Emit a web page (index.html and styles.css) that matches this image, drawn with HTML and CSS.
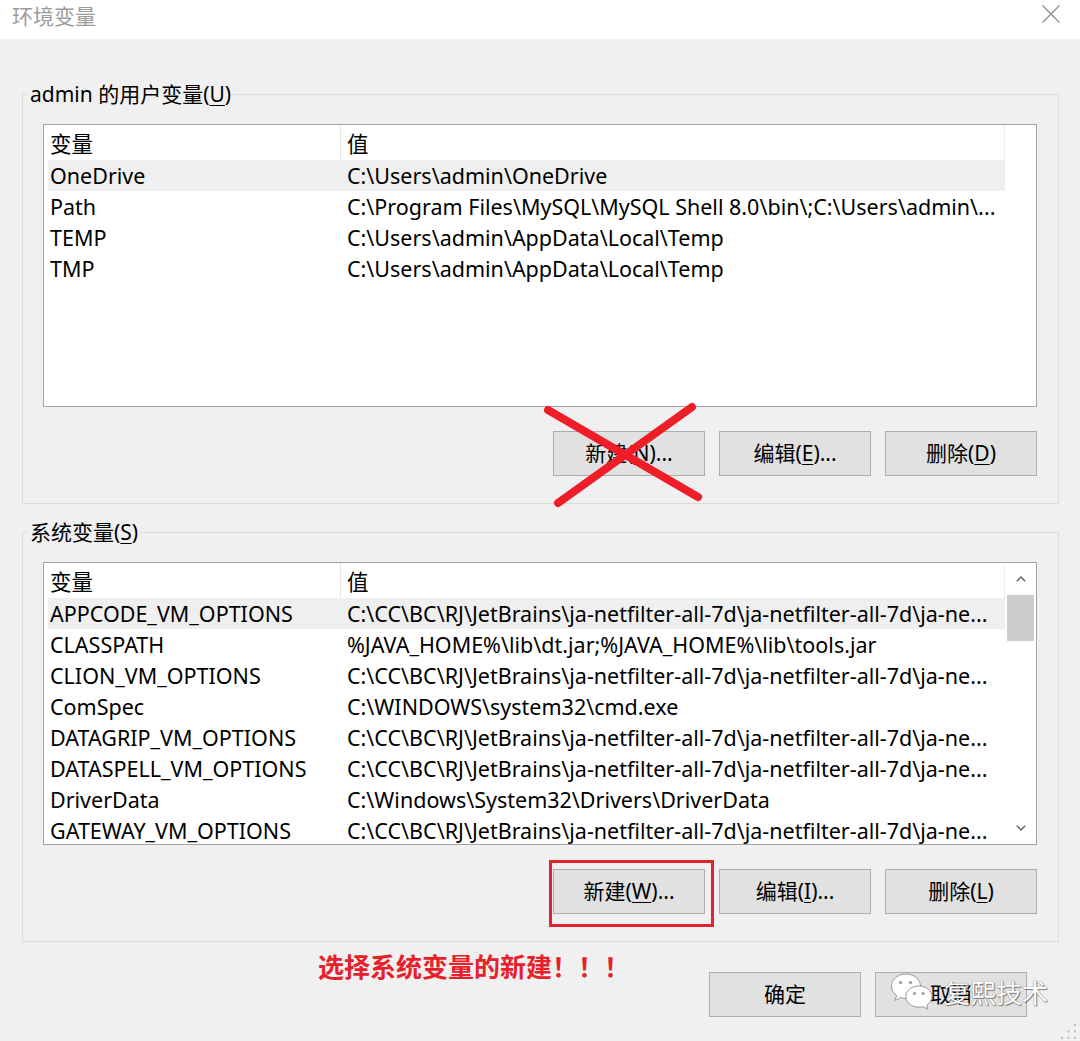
FILE: index.html
```html
<!DOCTYPE html>
<html lang="zh-CN">
<head>
<meta charset="utf-8">
<title>环境变量</title>
<link rel="stylesheet" href="styles.css">
</head>
<body>
<div class="window">
  <header class="titlebar">
    <span class="title">环境变量</span>
    <svg class="close" viewBox="0 0 18 18" aria-hidden="true">
      <path d="M0.5 0.5 L17.5 17.5 M17.5 0.5 L0.5 17.5" />
    </svg>
  </header>

  <main class="content">
    <fieldset class="group">
      <legend>admin 的用户变量(<u>U</u>)</legend>
      <div class="group-body">
        <div class="list">
          <div class="list-main">
            <div class="list-head">
              <div class="col-name">变量</div>
              <div class="col-value">值</div>
            </div>
            <div class="row selected"><div class="cell-name">OneDrive</div><div class="cell-value">C:\Users\admin\OneDrive</div></div>
            <div class="row"><div class="cell-name">Path</div><div class="cell-value">C:\Program Files\MySQL\MySQL Shell 8.0\bin\;C:\Users\admin\...</div></div>
            <div class="row"><div class="cell-name">TEMP</div><div class="cell-value">C:\Users\admin\AppData\Local\Temp</div></div>
            <div class="row"><div class="cell-name">TMP</div><div class="cell-value">C:\Users\admin\AppData\Local\Temp</div></div>
          </div>
          <div class="scrollbar"></div>
        </div>
        <div class="actions">
          <button class="btn">新建(<u>N</u>)...</button>
          <button class="btn">编辑(<u>E</u>)...</button>
          <button class="btn">删除(<u>D</u>)</button>
        </div>
      </div>
    </fieldset>

    <fieldset class="group">
      <legend>系统变量(<u>S</u>)</legend>
      <div class="group-body">
        <div class="list">
          <div class="list-main">
            <div class="list-head">
              <div class="col-name">变量</div>
              <div class="col-value">值</div>
            </div>
            <div class="row selected"><div class="cell-name">APPCODE_VM_OPTIONS</div><div class="cell-value">C:\CC\BC\RJ\JetBrains\ja-netfilter-all-7d\ja-netfilter-all-7d\ja-ne...</div></div>
            <div class="row"><div class="cell-name">CLASSPATH</div><div class="cell-value">%JAVA_HOME%\lib\dt.jar;%JAVA_HOME%\lib\tools.jar</div></div>
            <div class="row"><div class="cell-name">CLION_VM_OPTIONS</div><div class="cell-value">C:\CC\BC\RJ\JetBrains\ja-netfilter-all-7d\ja-netfilter-all-7d\ja-ne...</div></div>
            <div class="row"><div class="cell-name">ComSpec</div><div class="cell-value">C:\WINDOWS\system32\cmd.exe</div></div>
            <div class="row"><div class="cell-name">DATAGRIP_VM_OPTIONS</div><div class="cell-value">C:\CC\BC\RJ\JetBrains\ja-netfilter-all-7d\ja-netfilter-all-7d\ja-ne...</div></div>
            <div class="row"><div class="cell-name">DATASPELL_VM_OPTIONS</div><div class="cell-value">C:\CC\BC\RJ\JetBrains\ja-netfilter-all-7d\ja-netfilter-all-7d\ja-ne...</div></div>
            <div class="row"><div class="cell-name">DriverData</div><div class="cell-value">C:\Windows\System32\Drivers\DriverData</div></div>
            <div class="row"><div class="cell-name">GATEWAY_VM_OPTIONS</div><div class="cell-value">C:\CC\BC\RJ\JetBrains\ja-netfilter-all-7d\ja-netfilter-all-7d\ja-ne...</div></div>
          </div>
          <div class="scrollbar">
            <div class="sb-arrow">
              <svg viewBox="0 0 10 6" aria-hidden="true"><polyline points="0.8,5.2 5,1 9.2,5.2" /></svg>
            </div>
            <div class="sb-thumb"></div>
            <div class="sb-track"></div>
            <div class="sb-arrow sb-arrow-down">
              <svg viewBox="0 0 10 6" aria-hidden="true"><polyline points="0.8,0.8 5,5 9.2,0.8" /></svg>
            </div>
          </div>
        </div>
        <div class="actions">
          <span class="btn-wrap">
            <button class="btn">新建(<u>W</u>)...</button>
            <span class="callout"></span>
          </span>
          <button class="btn">编辑(<u>I</u>)...</button>
          <button class="btn">删除(<u>L</u>)</button>
        </div>
      </div>
    </fieldset>
  </main>

  <footer class="footer">
    <p class="note">选择系统变量的新建！！！</p>
    <div class="footer-actions">
      <button class="btn">确定</button>
      <button class="btn">取消</button>
    </div>
  </footer>

  <!-- red cross struck over the user-variable "new" button -->
  <svg class="strike" viewBox="0 0 170 115" aria-hidden="true">
    <line x1="8" y1="12" x2="158" y2="99" />
    <line x1="152" y1="9" x2="18" y2="105" />
  </svg>

  <!-- account watermark -->
  <div class="watermark">
    <svg class="wm-icon" viewBox="0 0 44 40" aria-hidden="true">
      <path class="bubble" d="M16 2 C7.7 2 1.5 7.6 1.5 14.2 C1.5 18 3.5 21.2 6.6 23.4 L5 28.5 L10.8 25.6 C12.5 26.1 14.2 26.4 16 26.4 C24.3 26.4 30.5 20.8 30.5 14.2 C30.5 7.6 24.3 2 16 2 Z" />
      <circle class="eye" cx="10.5" cy="10.5" r="1.6" />
      <circle class="eye" cx="20.5" cy="10.5" r="1.6" />
      <path class="bubble" d="M29 14 C21.5 14 15.8 18.8 15.8 24.6 C15.8 30.4 21.5 35.2 29 35.2 C30.5 35.2 31.9 35 33.2 34.6 L38 37.3 L36.8 33 C39.8 31.1 42 28 42 24.6 C42 18.8 36.3 14 29 14 Z" />
      <circle class="eye" cx="24.5" cy="21.5" r="1.5" />
      <circle class="eye" cx="33" cy="21.5" r="1.5" />
    </svg>
    <span class="wm-text">复熙技术</span>
  </div>

  <svg class="grip" viewBox="0 0 16 16" aria-hidden="true">
    <rect x="13" y="1" width="2" height="2" />
    <rect x="6.5" y="7.5" width="2" height="2" />
    <rect x="13" y="7.5" width="2" height="2" />
    <rect x="0" y="14" width="2" height="2" />
    <rect x="6.5" y="14" width="2" height="2" />
    <rect x="13" y="14" width="2" height="2" />
  </svg>
</div>
</body>
</html>
```

FILE: styles.css
```css
* {
  box-sizing: border-box;
}

html,
body {
  margin: 0;
  padding: 0;
}

body {
  width: 1080px;
  height: 1041px;
  overflow: hidden;
  background: #f0f0f0;
  color: #000;
  font-family: "Noto Sans", "Noto Sans CJK SC", sans-serif;
  font-size: 21px;
}

.window {
  position: relative;
  height: 1041px;
  display: flex;
  flex-direction: column;
}

/* ---- title bar ---- */
.titlebar {
  flex: none;
  height: 39px;
  background: #fff;
  display: flex;
  justify-content: space-between;
  align-items: flex-start;
  padding: 3px 20px 0 12px;
}

.title {
  font-family: "Noto Sans CJK SC", sans-serif;
  font-size: 21px;
  line-height: 24px;
  color: #9c9c9c;
}

.close {
  width: 18px;
  height: 18px;
  margin-top: 2px;
}

.close path {
  stroke: #8e8e8e;
  stroke-width: 1.3;
  fill: none;
}

/* ---- group boxes ---- */
.content {
  flex: none;
  padding: 43px 21px 0 22px;
}

.group {
  margin: 0;
  padding: 0;
  min-width: 0;
  border: 1px solid #dcdcdc;
}

.group + .group {
  margin-top: 16px;
}

.group legend {
  margin-left: 5px;
  padding: 0 2px;
  font-size: 21px;
  line-height: 24px;
}

.group-body {
  padding: 18px 21px 27px 20px;
}

u {
  text-decoration-thickness: 1px;
  text-underline-offset: 3px;
}

/* ---- list views ---- */
.list {
  height: 283px;
  border: 1px solid #a3a3a3;
  background: #fff;
  display: flex;
  overflow: hidden;
  font-size: 21.5px;
}

.list-main {
  flex: 1;
  min-width: 0;
  padding-left: 4px;
}

.list-head {
  height: 35px;
  display: flex;
  line-height: 33px;
  padding-top: 2px;
}

.list-head .col-name {
  width: 293px;
  padding-left: 2px;
  margin-top: -2px;
  border-right: 1px solid #e5e5e5;
}

.list-head .col-value {
  flex: 1;
  padding-left: 6px;
  margin-top: -2px;
  padding-top: 2px;
  border-right: 1px solid #ececec;
}

.list-head .col-name {
  padding-top: 2px;
}

.row {
  height: 31px;
  display: flex;
  line-height: 31px;
  white-space: nowrap;
}

.row.selected {
  background: #efefef;
}

.cell-name {
  flex: none;
  width: 293px;
  padding-left: 2px;
  overflow: hidden;
}

.cell-value {
  flex: 1;
  min-width: 0;
  padding: 0 0 0 6px;
  overflow: hidden;
  text-overflow: ellipsis;
}

/* ---- scrollbar ---- */
.scrollbar {
  flex: none;
  width: 31px;
  display: flex;
  flex-direction: column;
  background: #fff;
}

.sb-arrow {
  height: 32px;
  display: flex;
  align-items: center;
  justify-content: center;
  padding-left: 1px;
}

.sb-arrow svg {
  width: 10px;
  height: 6px;
}

.sb-arrow polyline {
  fill: none;
  stroke: #606060;
  stroke-width: 1.4;
}

.sb-thumb {
  height: 46px;
  margin: 0 2px;
  background: #cdcdcd;
}

.sb-track {
  flex: 1;
}

.sb-arrow-down {
  height: 33px;
}

/* ---- buttons ---- */
.actions {
  display: flex;
  justify-content: flex-end;
  gap: 14px;
  margin-top: 24px;
}

.btn {
  width: 152px;
  height: 45px;
  padding: 0;
  margin: 0;
  border: 1px solid #adadad;
  background: #e1e1e1;
  color: #000;
  font: inherit;
  line-height: 1;
}

.btn-wrap {
  position: relative;
  display: flex;
}

.callout {
  position: absolute;
  left: -4px;
  top: -9px;
  right: -9px;
  bottom: -13px;
  border: 3px solid #e8202a;
  pointer-events: none;
}

/* ---- footer ---- */
.footer {
  flex: 1;
  display: flex;
  align-items: flex-start;
  padding: 0 53px 0 318px;
}

.note {
  margin: 8px 0 0;
  font-family: "Noto Sans CJK SC", sans-serif;
  font-size: 26px;
  line-height: 32px;
  font-weight: 700;
  color: #e8202a;
}

.footer-actions {
  margin-left: auto;
  margin-top: 30px;
  display: flex;
  gap: 14px;
}

/* ---- overlays ---- */
.strike {
  position: absolute;
  left: 540px;
  top: 398px;
  width: 170px;
  height: 115px;
}

.strike line {
  stroke: #ee1d27;
  stroke-width: 8;
  stroke-linecap: round;
}

.watermark {
  position: absolute;
  left: 890px;
  top: 972px;
  display: flex;
  align-items: center;
  gap: 10px;
}

.wm-icon {
  width: 44px;
  height: 40px;
}

.wm-icon .bubble {
  fill: #fff;
  stroke: #9a9a9a;
  stroke-width: 1;
}

.wm-icon .eye {
  fill: #9a9a9a;
}

.wm-text {
  font-family: "Noto Sans CJK SC", sans-serif;
  font-size: 26px;
  line-height: 30px;
  color: #fff;
  text-shadow: 0 0 1px #555, 1px 1px 1px rgba(0, 0, 0, 0.45);
}

.grip {
  position: absolute;
  right: 3px;
  bottom: 2px;
  width: 16px;
  height: 16px;
}

.grip rect {
  fill: #bdbdbd;
}
```
